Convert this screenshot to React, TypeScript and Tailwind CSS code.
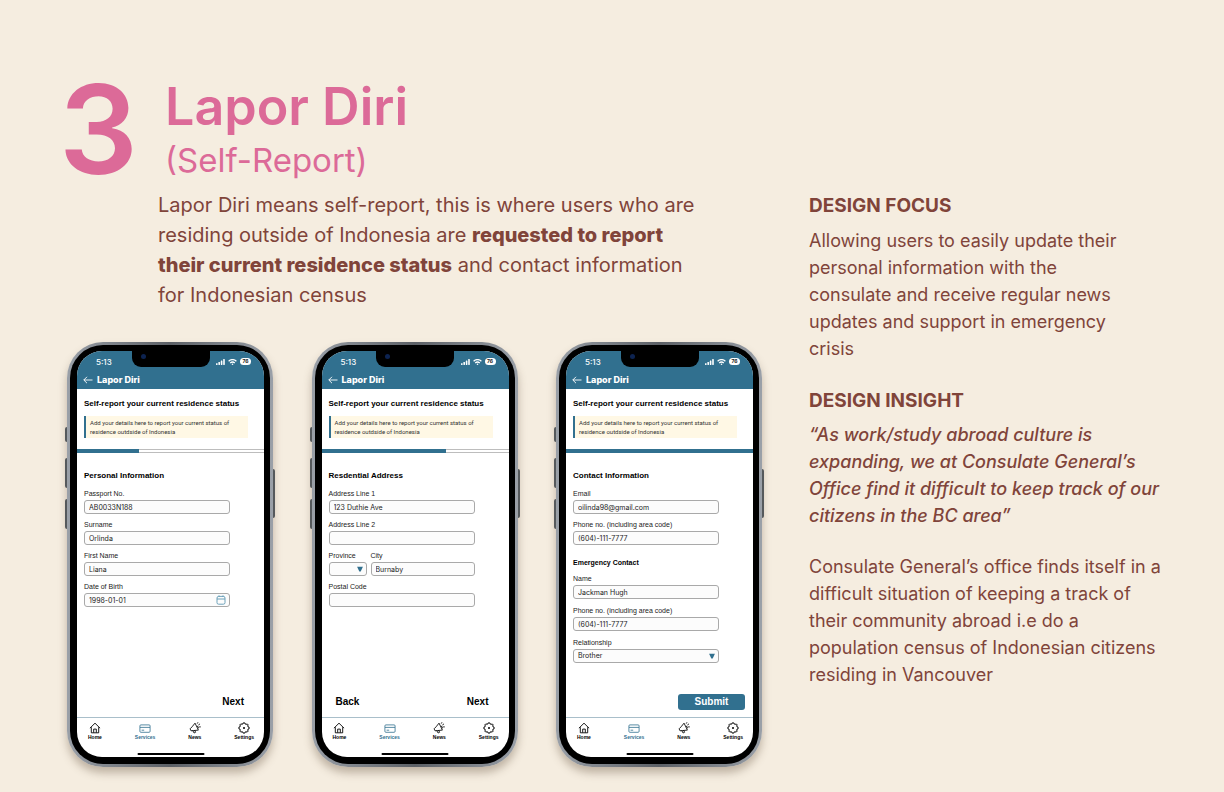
import React from "react";

type FieldProps = {
  id: string;
  label: string;
  value?: string;
  className?: string;
  kind?: "text" | "select" | "date";
};

function Field({ id, label, value = "", className = "w-[146px]", kind = "text" }: FieldProps) {
  const box =
    "h-[14px] w-full appearance-none rounded-[3px] border border-[#a9a9a9] bg-[#fcfcfc] px-1 font-['Inter',sans-serif] text-[7px] leading-3 text-[#222]";
  return (
    <div className={className}>
      <label htmlFor={id} className="block whitespace-nowrap text-[7px] leading-3 text-[#222]">
        {label}
      </label>
      <div className="relative flex">
        {kind === "select" ? (
          <select id={id} defaultValue={value} className={box}>
            <option value={value}>{value}</option>
          </select>
        ) : (
          <input id={id} defaultValue={value} className={box} />
        )}
        {kind === "select" && (
          <svg viewBox="0 0 6 6" className="pointer-events-none absolute top-1 right-1 size-1.5 fill-[#31708f]">
            <path d="M0.1 0.8h5.8L3.7 5.4H2.3z" />
          </svg>
        )}
        {kind === "date" && (
          <svg
            viewBox="0 0 10 10"
            className="pointer-events-none absolute top-0.5 right-1 size-2.5 fill-none stroke-[#5d98b3]"
            strokeWidth="0.9"
          >
            <rect x="1" y="1.4" width="8" height="7.8" rx="1.6" />
            <path d="M1 4h8M3 0.4v1.6M7 0.4v1.6" />
          </svg>
        )}
      </div>
    </div>
  );
}

function StatusBar() {
  return (
    <div className="flex h-[21px] items-center justify-between pr-[13px] pl-[19px] font-['Inter',sans-serif] text-white">
      <span className="text-[8px] leading-5 font-medium">5:13</span>
      <div className="flex items-center gap-[3px]">
        <svg viewBox="0 0 9 6" className="h-1.5 w-[9px] fill-white">
          <rect x="0" y="4.2" width="1.6" height="1.8" rx="0.4" />
          <rect x="2.4" y="3" width="1.6" height="3" rx="0.4" />
          <rect x="4.8" y="1.6" width="1.6" height="4.4" rx="0.4" />
          <rect x="7.2" y="0" width="1.6" height="6" rx="0.4" />
        </svg>
        <svg viewBox="0 0 9 6" className="h-1.5 w-[9px] fill-none stroke-white" strokeWidth="1.3">
          <path d="M0.6 2.2Q4.5 -1 8.4 2.2M2.2 3.9Q4.5 2.1 6.8 3.9" />
          <circle cx="4.5" cy="5.2" r="0.8" className="fill-white stroke-none" />
        </svg>
        <span className="flex h-[7px] w-[11px] items-center justify-center rounded-sm bg-white text-[5px] leading-none font-bold text-[#222]">
          76
        </span>
      </div>
    </div>
  );
}

function HomeIcon() {
  return (
    <svg viewBox="0 0 12 12" className="size-3 fill-none stroke-current" strokeWidth="0.9" strokeLinejoin="round">
      <path d="M0.9 6.2L6 1.2l5.1 5M2.3 5.2v5.6h7.4V5.2M4.7 10.6V7.1h2.6v3.5" />
    </svg>
  );
}

function CardIcon() {
  return (
    <svg viewBox="0 0 12 12" className="size-3 fill-none stroke-current" strokeWidth="0.8" strokeLinejoin="round">
      <rect x="0.9" y="2.9" width="10.2" height="7.4" rx="1" />
      <path d="M1 5.4h10M2.6 8.2h2.6" />
    </svg>
  );
}

function MegaphoneIcon() {
  return (
    <svg
      viewBox="0 0 12 12"
      className="size-3 fill-none stroke-current"
      strokeWidth="0.85"
      strokeLinejoin="round"
      strokeLinecap="round"
    >
      <path d="M6.2 1.5L9.4 8.1L4.2 8.6L2 8.8L1.1 6.8L2.8 5.1zM3.9 8.8L5.1 11L6.6 10.3L5.8 8.6" />
      <path d="M8.3 4.1Q9.8 4.3 9.4 6M8.4 1.3L8.8 0.6M9.7 2.8L10.7 2.1M10.5 4.9h0.9" />
    </svg>
  );
}

function GearIcon() {
  return (
    <svg viewBox="0 0 12 12" className="size-3 fill-none stroke-current" strokeWidth="1" strokeLinejoin="round">
      <path d="M4.9 1.9L5.2 0.9H6.8L7.1 1.9L8.2 2.4L9.2 1.9L10.2 2.9L9.7 3.9L10.1 4.9L11.1 5.2V6.8L10.1 7.1L9.7 8.1L10.2 9.1L9.1 10.2L8.1 9.7L7.1 10.1L6.8 11.1H5.2L4.9 10.1L3.9 9.7L2.9 10.2L1.8 9.1L2.3 8.1L1.9 7.1L0.9 6.8V5.2L1.9 4.9L2.3 3.9L1.8 2.9L2.9 1.8L3.9 2.3z" />
      <circle cx="6" cy="6" r="1" className="fill-current stroke-none" />
    </svg>
  );
}

const tabs = [
  { name: "Home", Icon: HomeIcon },
  { name: "Services", Icon: CardIcon },
  { name: "News", Icon: MegaphoneIcon },
  { name: "Settings", Icon: GearIcon },
];

type PhoneProps = {
  progress: string;
  children: React.ReactNode;
  actions: React.ReactNode;
};

function Phone({ progress, children, actions }: PhoneProps) {
  return (
    <article className="relative flex min-h-[425px] w-[206px] shrink-0 rounded-[36px] bg-linear-to-r from-[#9aa0a8] via-[#5c6066] to-[#9aa0a8] p-[3px] shadow-[0_6px_8px_rgba(90,70,50,0.35)]">
      <i className="absolute top-[85px] -left-0.5 h-[15px] w-0.5 rounded-l-xs bg-[#55595c]" />
      <i className="absolute top-[116px] -left-0.5 h-[30px] w-0.5 rounded-l-xs bg-[#55595c]" />
      <i className="absolute top-[157px] -left-0.5 h-[30px] w-0.5 rounded-l-xs bg-[#55595c]" />
      <i className="absolute top-[127px] -right-0.5 h-[49px] w-0.5 rounded-r-xs bg-[#55595c]" />
      <div className="flex w-full rounded-[33px] bg-black pt-1.5 pr-1.5 pb-[7px] pl-[7px]">
        <div className="relative flex w-full flex-col overflow-hidden rounded-[25px] bg-white">
          <header className="h-[38px] bg-[#31708f] text-white">
            <StatusBar />
            <div className="flex h-[15px] items-center gap-1 pl-1.5">
              <svg viewBox="0 0 10 8" className="h-2 w-2.5 fill-none stroke-white" strokeWidth="0.9">
                <path d="M9.5 4H0.8M4 0.8L0.8 4L4 7.2" />
              </svg>
              <h2 className="font-['Inter',sans-serif] text-[9px] leading-4 font-extrabold">Lapor Diri</h2>
            </div>
          </header>
          <div className="absolute top-0 left-1/2 h-4 w-[78px] -translate-x-1/2 rounded-b-[9px] bg-black">
            <i className="absolute top-[3px] left-[9px] size-[5px] rounded-full bg-[#0d2350]" />
          </div>
          <div className="px-[7px] pt-[9px]">
            <h3 className="text-[8px] leading-3 font-bold whitespace-nowrap text-black">
              Self-report your current residence status
            </h3>
            <p className="mt-1.5 w-[164px] border-l-2 border-[#31708f] bg-[#fff8e5] py-0.5 pl-1 font-['Roboto',sans-serif] text-[6px] leading-[9px] whitespace-nowrap text-[#333]">
              Add your details here to report your current status of
              <br />
              residence outdside of Indonesia
            </p>
          </div>
          <div className="mt-[11px] h-1 border-y border-[#bdbdbd]">
            <div className={`-my-px h-1 bg-[#31708f] ${progress}`} />
          </div>
          <div className="flex-1 px-[7px] pt-[17px]">{children}</div>
          <div className="flex h-6 items-center">{actions}</div>
          <nav className="mt-[3px] flex h-10 items-start justify-between border-t border-[#a9bfca] pt-1 pr-2.5 pl-[11px]">
            {tabs.map(({ name, Icon }) => (
              <a
                key={name}
                href="#"
                className={
                  name === "Services"
                    ? "flex flex-col items-center text-[#31708f]"
                    : "flex flex-col items-center text-black"
                }
              >
                <Icon />
                <span className="text-[5px] leading-[7px] font-bold">{name}</span>
              </a>
            ))}
          </nav>
          <i className="absolute bottom-0.5 left-1/2 h-0.5 w-[67px] -translate-x-1/2 rounded-full bg-black" />
        </div>
      </div>
    </article>
  );
}

function SectionTitle({ children }: { children: React.ReactNode }) {
  return <h4 className="mb-1.5 text-[8px] leading-3 font-bold text-black">{children}</h4>;
}

const actionText = "text-[10px] leading-4 font-bold text-black";

export default function App() {
  return (
    <main className="grid min-h-screen grid-cols-[minmax(0,695px)_minmax(0,360px)] content-start gap-x-[47px] bg-[#f5ede0] pt-[72px] pr-10 pb-6 pl-[67px] font-['Liberation_Sans',sans-serif] text-[#80443a]">
      <section>
        <header className="flex font-['Inter',sans-serif] text-[#dc6a98]">
          <span className="-ml-2 w-[106px] text-[124px] leading-[114px] font-semibold">3</span>
          <div>
            <h1 className="text-[52px] leading-[70px] font-semibold">Lapor Diri</h1>
            <p className="text-[33px] leading-9">(Self-Report)</p>
          </div>
        </header>
        <p className="mt-1 ml-[91px] font-['Inter',sans-serif] text-[20px] leading-[30px] whitespace-nowrap">
          Lapor Diri means self-report, this is where users who are
          <br />
          residing outside of Indonesia are <strong className="font-extrabold">requested to report</strong>
          <br />
          <strong className="font-extrabold">their current residence status</strong> and contact information
          <br />
          for Indonesian census
        </p>
        <div className="mt-8 flex justify-between">
          <Phone progress="w-1/3" actions={<button className={`mr-5 ml-auto ${actionText}`}>Next</button>}>
            <SectionTitle>Personal Information</SectionTitle>
            <div className="grid gap-[5px]">
              <Field id="passport" label="Passport No." value="AB0033N188" />
              <Field id="surname" label="Surname" value="Orlinda" />
              <Field id="first-name" label="First Name" value="Liana" />
              <Field id="birth" label="Date of Birth" value="1998-01-01" kind="date" />
            </div>
          </Phone>
          <Phone
            progress="w-2/3"
            actions={
              <>
                <button className={`ml-3.5 ${actionText}`}>Back</button>
                <button className={`mr-5 ml-auto ${actionText}`}>Next</button>
              </>
            }
          >
            <SectionTitle>Resdential Address</SectionTitle>
            <div className="grid gap-[5px]">
              <Field id="address-1" label="Address Line 1" value="123 Duthie Ave" />
              <Field id="address-2" label="Address Line 2" />
              <div className="flex gap-1">
                <Field id="province" label="Province" kind="select" className="w-[38px]" />
                <Field id="city" label="City" value="Burnaby" className="w-[104px]" />
              </div>
              <Field id="postal" label="Postal Code" />
            </div>
          </Phone>
          <Phone
            progress="w-full"
            actions={
              <button className="mr-2 ml-auto h-4 w-[67px] rounded-[3px] bg-[#31708f] text-[10px] leading-4 font-bold text-white">
                Submit
              </button>
            }
          >
            <SectionTitle>Contact Information</SectionTitle>
            <div className="grid gap-[5px]">
              <Field id="email" label="Email" value="oilinda98@gmail.com" />
              <Field id="phone" label="Phone no. (including area code)" value="(604)-111-7777" />
            </div>
            <h4 className="mt-3 mb-1 text-[7px] leading-3 font-bold text-black">Emergency Contact</h4>
            <div className="grid gap-1.5">
              <Field id="contact-name" label="Name" value="Jackman Hugh" />
              <Field id="contact-phone" label="Phone no. (including area code)" value="(604)-111-7777" />
              <Field id="relationship" label="Relationship" value="Brother" kind="select" />
            </div>
          </Phone>
        </div>
      </section>
      <aside className="pt-[119px] font-['Inter',sans-serif] text-[18px] leading-[27px] whitespace-nowrap">
        <h2 className="text-[19px] leading-[30px] font-bold">DESIGN FOCUS</h2>
        <p className="mt-1.5">
          Allowing users to easily update their
          <br />
          personal information with the
          <br />
          consulate and receive regular news
          <br />
          updates and support in emergency
          <br />
          crisis
        </p>
        <h2 className="mt-6 text-[19px] leading-[30px] font-bold">DESIGN INSIGHT</h2>
        <blockquote className="mt-[5px] font-medium italic">
          “As work/study abroad culture is
          <br />
          expanding, we at Consulate General’s
          <br />
          Office find it difficult to keep track of our
          <br />
          citizens in the BC area”
        </blockquote>
        <p className="mt-6">
          Consulate General’s office finds itself in a
          <br />
          difficult situation of keeping a track of
          <br />
          their community abroad i.e do a
          <br />
          population census of Indonesian citizens
          <br />
          residing in Vancouver
        </p>
      </aside>
    </main>
  );
}
